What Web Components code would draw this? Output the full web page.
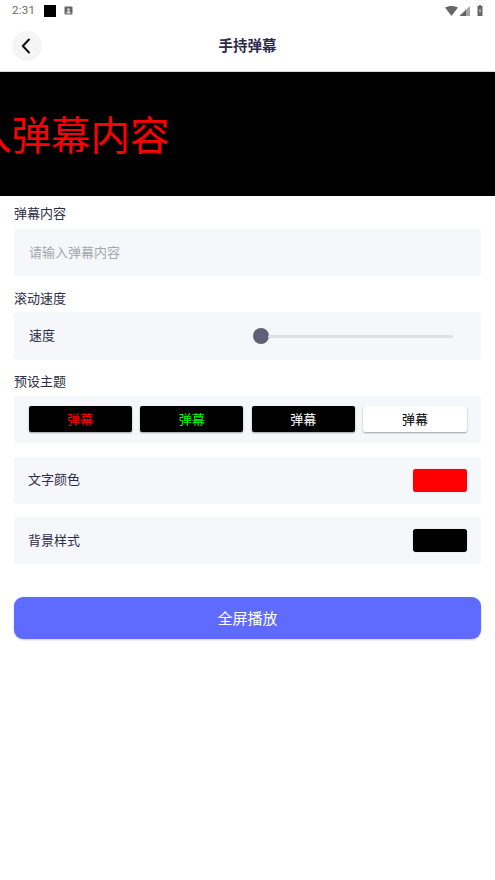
<!DOCTYPE html>
<html lang="zh"><head><meta charset="utf-8">
<style>
html,body{margin:0;padding:0;background:#fff}
body{width:495px;height:880px;overflow:hidden;font-family:"Noto Sans CJK SC","Noto Sans",sans-serif;color:#2a2a40}
</style></head><body>
<danmu-app></danmu-app>
<script>
function def(name, css, html){
  customElements.define(name, class extends HTMLElement{
    constructor(){super();const r=this.attachShadow({mode:'open'});r.innerHTML='<style>'+css+'</style>'+html;}
  });
}
def('status-bar',`:host{display:flex;align-items:center;height:21px;padding:0 12px 0 12px;font:11.5px/1 Roboto,sans-serif;color:#6a6a6a;letter-spacing:.3px}
.sq{width:12px;height:12px;background:#000;margin-left:9px}
.a{margin-left:8px;display:flex}
.sp{flex:1}
.r{display:flex;align-items:center;gap:1px}
svg{display:block}`,`<span>2:31</span><span class="sq"></span><span class="a"><svg width="9" height="9" viewBox="0 0 9 9"><rect x=".5" y=".5" width="8" height="8" rx="1" fill="#666"/><circle cx="4.5" cy="3.6" r="1.3" fill="#ddd"/><path d="M2 7.5 3.4 5.2H5.6L7 7.5z" fill="#ddd"/></svg></span><span class="sp"></span><span class="r"><svg width="13" height="10" viewBox="0 0 13 10"><path d="M0 1.6C3.6-.5 9.4-.5 13 1.6L6.5 10z" fill="#666"/></svg><svg width="11" height="10" viewBox="0 0 11 10"><path d="M11 0V10H0z" fill="#a5a5a5"/><path d="M7 4V10H1z" fill="#5f5f5f"/></svg><svg width="6" height="11" viewBox="0 0 6 11" style="margin-left:6px"><path d="M2 0H4V1H5.5V11H.5V1H2z" fill="#666"/><path d="M3.3 3 1.8 6.2H2.9L2.6 8.6 4.3 5.2H3.2z" fill="#ccc"/></svg></span>`);
def('app-header',`:host{display:grid;grid-template-columns:30px 1fr 30px;align-items:center;height:50px;padding:0 12px;box-sizing:border-box}
.b{width:30px;height:30px;border-radius:50%;background:#f5f5f5;display:flex;align-items:center;justify-content:center}
.t{text-align:center;font-size:14.5px;font-weight:700;color:#2c2c48;line-height:20px;margin-bottom:2px}`,`<div class="b"><svg width="30" height="30" viewBox="0 0 30 30"><path d="M17 8.5 10.8 15 17 21.5" fill="none" stroke="#111" stroke-width="2" stroke-linecap="round" stroke-linejoin="round"/></svg></div><div class="t"><slot></slot></div>`);
def('danmu-preview',`:host{display:flex;align-items:center;height:125px;background:#000;overflow:hidden;color:#f00;font-size:39.5px;line-height:1;white-space:nowrap;border-top:1px solid #d8d8d8;box-sizing:border-box}
span{margin-left:-107px;padding-bottom:2px}`,`<span><slot></slot></span>`);
def('form-section',`:host{display:block}
.l{font-size:13px;line-height:17px;padding-bottom:1px;color:#2d2d45;margin-bottom:var(--gap,6px)}`,`<div class="l"><slot name="label"></slot></div><slot></slot>`);
def('form-card',`:host{display:flex;align-items:center;justify-content:space-between;box-sizing:border-box;height:var(--h,47px);padding:0 14px;background:#f6f7fb;border-radius:4px;font-size:13px;color:#2d2d45}`,`<slot></slot>`);
def('speed-slider',`:host{display:flex;align-items:center;width:200px;margin-right:14px}
.k{width:16px;height:16px;border-radius:50%;background:#5f5f78;flex:none}
.t{flex:1;height:3px;background:#dfdfe6;border-radius:2px;margin-left:-1px}`,`<div class="k"></div><div class="t"></div>`);
def('theme-chip',`:host{display:flex;align-items:center;justify-content:center;flex:1;height:26px;border-radius:2px;background:var(--bg,#000);color:var(--fg,#fff);font-size:13px;box-shadow:0 1px 2px rgba(0,0,0,.35)}`,`<slot></slot>`);
def('color-swatch',`:host{display:block;width:54px;height:23px;border-radius:3px;background:var(--c,#000);box-shadow:0 0 1px rgba(0,0,0,.4)}`,``);
def('primary-button',`:host{display:flex;align-items:center;justify-content:center;height:42px;padding-bottom:2px;box-sizing:border-box;border-radius:9px;background:#5f6bff;color:#fff;font-size:15px;box-shadow:0 1px 2px rgba(60,70,200,.25)}`,`<slot></slot>`);
def('danmu-app',`:host{display:block}
.f{display:flex;flex-direction:column;padding:8px 14px 0}
.ph{color:#a6a6ae;margin:0 0 2px 1px}
.t1{margin:0 0 4px 1px}
.t2{margin:0 0 4px}
.t3{margin:0 0 2px}
.themes{display:flex;gap:8.5px;width:100%;margin:0 .5px 2px}
.s1{--gap:7px}.s2{--gap:5px;margin-top:13px}.s3{--gap:6px;margin-top:12px}
.c1{margin-top:14px;display:flex}.c2{margin-top:13px;display:flex}
form-card.g{flex:1}
.btn{margin-top:33px}`,`
<status-bar></status-bar>
<app-header>手持弹幕</app-header>
<danmu-preview>请输入弹幕内容</danmu-preview>
<div class="f">
 <form-section class="s1"><span slot="label">弹幕内容</span><form-card><span class="ph">请输入弹幕内容</span></form-card></form-section>
 <form-section class="s2"><span slot="label">滚动速度</span><form-card style="--h:48px"><span class="t1">速度</span><speed-slider></speed-slider></form-card></form-section>
 <form-section class="s3"><span slot="label">预设主题</span><form-card><div class="themes">
   <theme-chip style="--fg:#f00">弹幕</theme-chip><theme-chip style="--fg:#0f0">弹幕</theme-chip><theme-chip>弹幕</theme-chip><theme-chip style="--bg:#fff;--fg:#000">弹幕</theme-chip>
 </div></form-card></form-section>
 <div class="c1"><form-card class="g"><span class="t2">文字颜色</span><color-swatch style="--c:#f00"></color-swatch></form-card></div>
 <div class="c2"><form-card class="g"><span class="t3">背景样式</span><color-swatch style="--c:#000"></color-swatch></form-card></div>
 <primary-button class="btn">全屏播放</primary-button>
</div>`);
</script></body></html>
